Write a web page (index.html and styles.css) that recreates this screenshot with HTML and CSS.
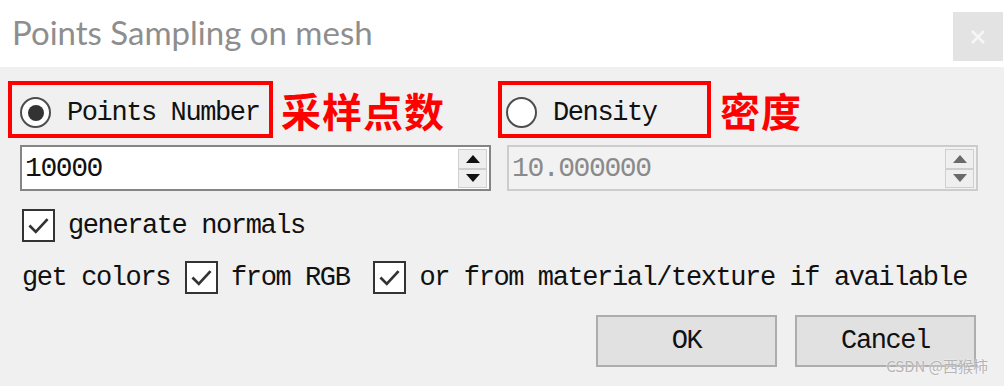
FILE: index.html
```html
<!DOCTYPE html>
<html lang="en">
<head>
    <meta charset="UTF-8">
    <meta name="viewport" content="width=device-width, initial-scale=1.0">
    <title>Points Sampling on mesh</title>
    <link rel="stylesheet" href="styles.css">
</head>
<body>
    <div class="dialog">
        <div class="titlebar">
            <span class="title">Points Sampling on mesh</span>
            <span class="close">
                <svg viewBox="0 0 14 14" width="14" height="14"><path d="M1 1 L13 13 M13 1 L1 13" stroke="#f6f6f6" stroke-width="2.6"/></svg>
            </span>
        </div>

        <div class="panel">
            <div class="mode-row">
                <div class="mark mark-points">
                    <label class="radio"><span class="radio-dot checked"></span>Points Number</label>
                </div>
                <span class="note note-points">采样点数</span>
                <div class="mark mark-density">
                    <label class="radio"><span class="radio-dot"></span>Density</label>
                </div>
                <span class="note note-density">密度</span>
            </div>

            <div class="spin-row">
                <div class="spinbox">
                    <span class="spin-value">10000</span>
                    <div class="spin-buttons">
                        <span class="spin-btn"><span class="arrow up"></span></span>
                        <span class="spin-btn"><span class="arrow down"></span></span>
                    </div>
                </div>
                <div class="spinbox disabled">
                    <span class="spin-value">10.000000</span>
                    <div class="spin-buttons">
                        <span class="spin-btn"><span class="arrow up"></span></span>
                        <span class="spin-btn"><span class="arrow down"></span></span>
                    </div>
                </div>
            </div>

            <div class="check-row">
                <span class="checkbox">
                    <svg viewBox="0 0 32 32" width="29" height="29"><path d="M6 16 L13 23 L26 9" fill="none" stroke="#333" stroke-width="3"/></svg>
                </span>
                <span class="text">generate normals</span>
            </div>

            <div class="check-row colors-row">
                <span class="text lead">get colors</span>
                <span class="checkbox">
                    <svg viewBox="0 0 32 32" width="29" height="29"><path d="M6 16 L13 23 L26 9" fill="none" stroke="#333" stroke-width="3"/></svg>
                </span>
                <span class="text rgb">from RGB</span>
                <span class="checkbox">
                    <svg viewBox="0 0 32 32" width="29" height="29"><path d="M6 16 L13 23 L26 9" fill="none" stroke="#333" stroke-width="3"/></svg>
                </span>
                <span class="text">or from material/texture if available</span>
            </div>

            <div class="button-row">
                <button class="btn">OK</button>
                <button class="btn">Cancel</button>
            </div>
        </div>

        <div class="watermark">CSDN @西猴柿</div>
    </div>
</body>
</html>
```

FILE: styles.css
```css
body {
    margin: 0;
    background-color: #f0f0f0;
}
.dialog {
    position: relative;
    width: 1004px;
    height: 386px;
    overflow: hidden;
    background-color: #f0f0f0;
    font-family: 'Liberation Mono', 'DejaVu Sans Mono', monospace;
    font-size: 27px;
    letter-spacing: -1.4px;
    color: #111;
}
.titlebar {
    display: flex;
    align-items: flex-start;
    height: 67px;
    background-color: white;
}
.title {
    margin: 12px 0 0 12px;
    font-family: Lato, 'Open Sans', sans-serif;
    font-size: 33px;
    letter-spacing: 0;
    color: #8e8e8e;
}
.close {
    margin: 12px 1px 0 auto;
    width: 50px;
    height: 49px;
    display: flex;
    align-items: center;
    justify-content: center;
    background-color: #e3e3e3;
}
.panel {
    padding-top: 14px;
}
.mode-row {
    display: flex;
    align-items: center;
    padding-left: 8px;
    height: 57px;
}
.mark {
    box-sizing: border-box;
    height: 57px;
    border: 4px solid #ff0000;
    display: flex;
    align-items: center;
    padding-top: 6px;
}
.mark-points {
    width: 265px;
    padding-left: 8px;
}
.mark-density {
    width: 213px;
    padding-left: 4px;
}
.radio {
    display: flex;
    align-items: center;
    gap: 16px;
}
.radio-dot {
    box-sizing: border-box;
    width: 31px;
    height: 31px;
    border: 2px solid #4d4d4d;
    border-radius: 50%;
    background-color: white;
    display: flex;
    align-items: center;
    justify-content: center;
}
.radio-dot.checked::after {
    content: "";
    width: 16px;
    height: 16px;
    border-radius: 50%;
    background-color: #333;
}
.note {
    font-family: 'Noto Sans CJK SC', sans-serif;
    font-weight: bold;
    font-size: 40px;
    letter-spacing: 1px;
    color: #ff0000;
    line-height: 1;
}
.note-points {
    width: 217px;
    margin-left: 8px;
}
.note-density {
    margin-left: 9px;
}
.spin-row {
    display: flex;
    gap: 16px;
    margin-top: 7px;
    padding-left: 20px;
}
.spinbox {
    box-sizing: border-box;
    width: 471px;
    height: 46px;
    border: 2px solid #858585;
    background-color: white;
    display: flex;
    align-items: center;
    padding: 2px 2px 1px 3px;
}
.spinbox.disabled {
    border-color: #cccccc;
    background-color: #f2f2f2;
    color: #8a8a8a;
}
.spin-value {
    flex: 1;
    font-size: 28px;
}
.spin-buttons {
    align-self: stretch;
    width: 29px;
    display: flex;
    flex-direction: column;
}
.spin-btn {
    flex: 1;
    box-sizing: border-box;
    border: 1px solid #cfcfcf;
    background-color: #efefef;
    display: flex;
    align-items: center;
    justify-content: center;
}
.arrow {
    width: 0;
    height: 0;
    border-left: 7px solid transparent;
    border-right: 7px solid transparent;
}
.arrow.up {
    border-bottom: 8px solid #111;
}
.arrow.down {
    border-top: 8px solid #111;
}
.disabled .arrow.up {
    border-bottom-color: #6a6a6a;
}
.disabled .arrow.down {
    border-top-color: #6a6a6a;
}
.check-row {
    display: flex;
    align-items: center;
    margin-top: 18px;
    padding-left: 22px;
    height: 33px;
}
.colors-row {
    margin-top: 19px;
}
.checkbox {
    box-sizing: border-box;
    width: 33px;
    height: 33px;
    border: 2px solid #333;
    background-color: white;
    display: flex;
    align-items: center;
    justify-content: center;
    margin-right: 13px;
}
.lead {
    margin-right: 15px;
}
.rgb {
    margin-right: 24px;
}
.button-row {
    display: flex;
    justify-content: flex-end;
    gap: 18px;
    margin-top: 21px;
    padding-right: 28px;
}
.btn {
    width: 181px;
    height: 52px;
    border: 2px solid #adadad;
    background-color: #e1e1e1;
    font-family: inherit;
    font-size: 27px;
    letter-spacing: -1.4px;
    color: #111;
    padding: 0;
}
.watermark {
    position: absolute;
    right: 16px;
    bottom: 10px;
    font-family: 'Noto Sans CJK SC', sans-serif;
    font-size: 15px;
    letter-spacing: 0;
    color: #b4b4b4;
    text-shadow: 0 0 2px #fff;
}
```
